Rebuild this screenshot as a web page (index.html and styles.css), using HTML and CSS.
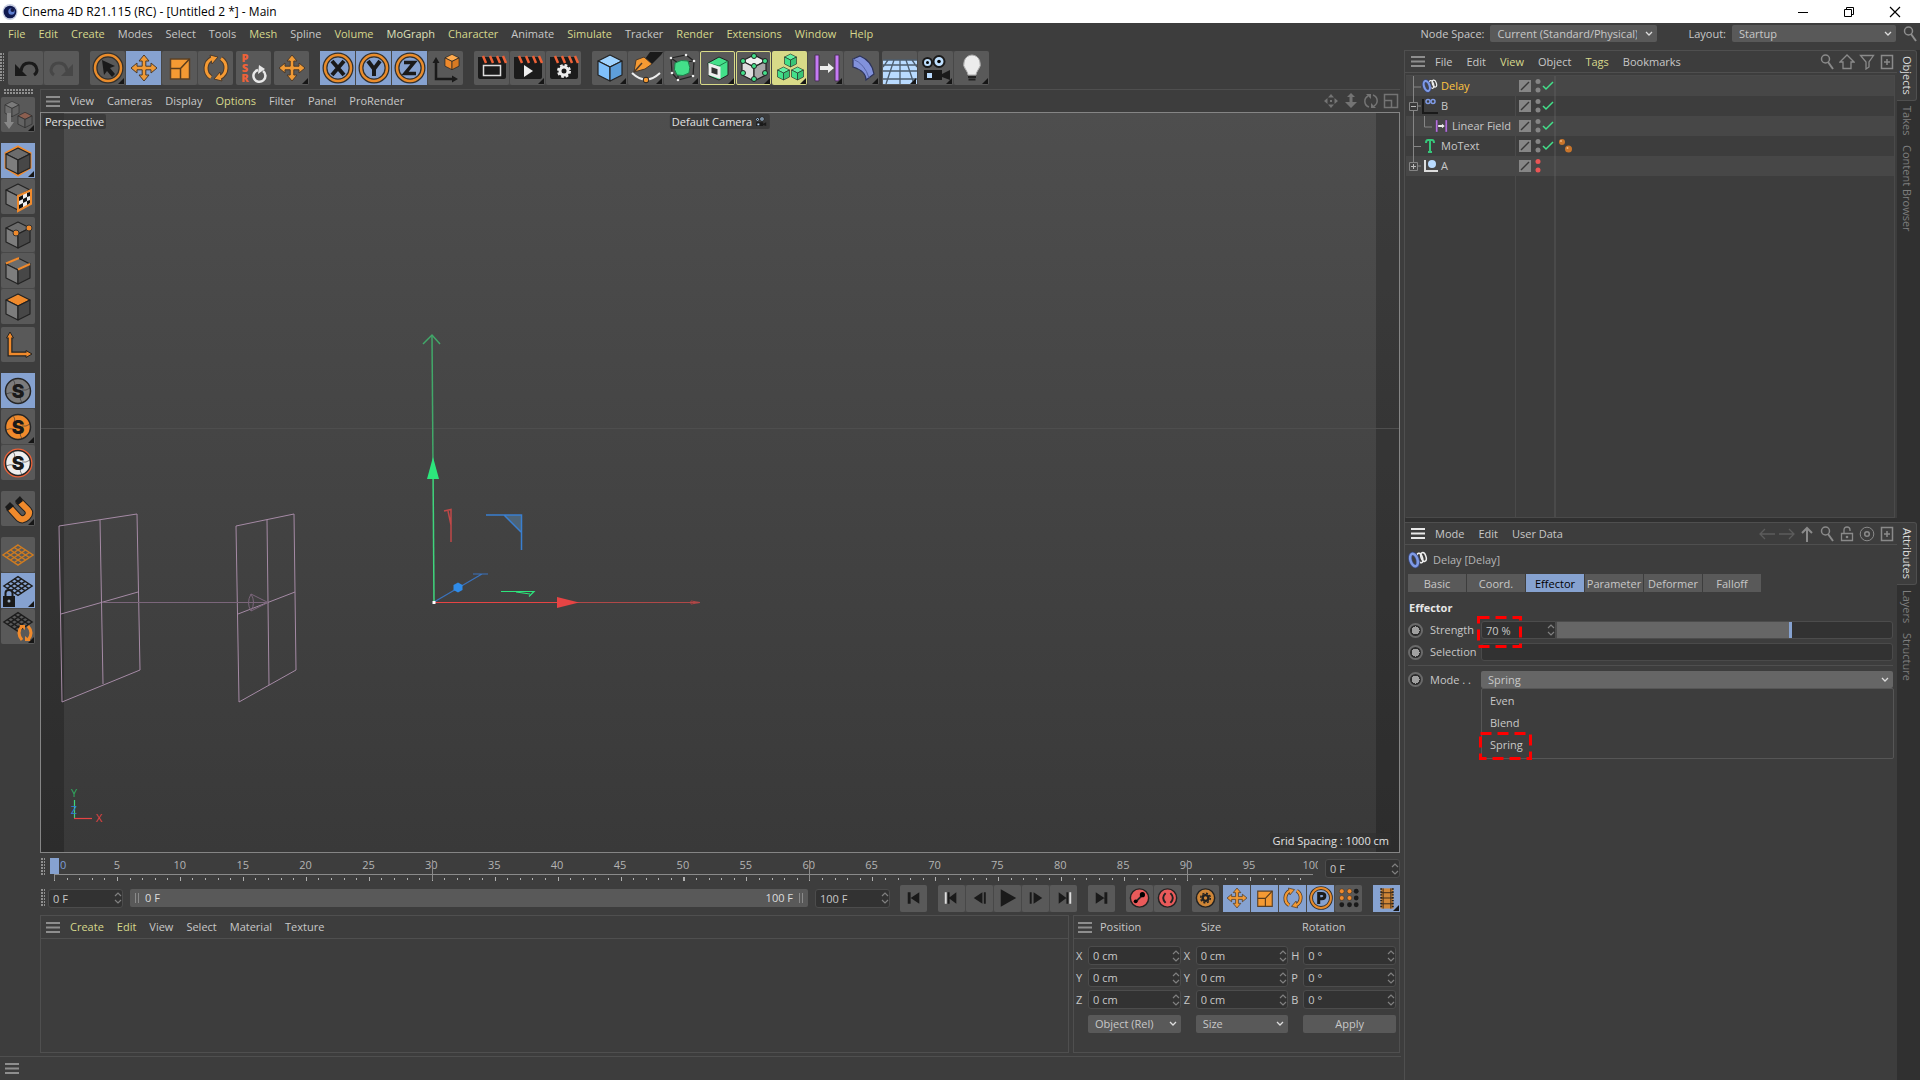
FILE: index.html
```html
<!DOCTYPE html>
<html lang="en">
<head>
<meta charset="utf-8">
<title>Cinema 4D R21.115 (RC) - [Untitled 2 *] - Main</title>
<link rel="stylesheet" href="styles.css">
</head>
<body>
<svg class="defs" aria-hidden="true">
  <symbol id="move" viewBox="0 0 34 34"><path d="M17 4l5 6h-3.200v5.200H24V12l6 5-6 5v-3.200h-5.200V24H22l-5 6-5-6h3.200v-5.200H10V22l-6-5 6-5v3.200h5.200V10H12z" fill="#f09a35" stroke="#4a3a2c" stroke-width="1"/></symbol>
  <symbol id="scale" viewBox="0 0 34 34"><path d="M7.500 8h19v20h-19z" fill="#f59a33" stroke="#5a4128" stroke-width="1.500"/><path d="M7.500 17.500h10v10.500M17.500 17.500l9-9.500" fill="none" stroke="#5a3c1c" stroke-width="1.500"/></symbol>
  <symbol id="rotate" viewBox="0 0 34 34"><g fill="none" stroke="#4a3a2c" stroke-width="5"><path d="M12 26.500A11 11 0 0 1 13 7.500M22 7.500A11 11 0 0 1 21 26.500"/></g><path d="M11 4l8 2-6 7zM23 30l-8-2 6-7z" fill="#f59a33" stroke="#4a3a2c"/><g fill="none" stroke="#f59a33" stroke-width="3"><path d="M12 26.500A11 11 0 0 1 13 7.500M22 7.500A11 11 0 0 1 21 26.500"/></g></symbol>
  <symbol id="cube" viewBox="0 0 34 34"><g stroke="#222" stroke-width="1.200" stroke-linejoin="round"><path d="M17 4l12 6-12 6-12-6z" fill="var(--top)"/><path d="M5 10l12 6v14L5 24z" fill="var(--left)"/><path d="M29 10l-12 6v14l12-6z" fill="var(--right)"/></g></symbol>
  <symbol id="ring" viewBox="0 0 34 34"><circle cx="17" cy="17" r="13" fill="none" stroke="#33302c" stroke-width="5"/><circle cx="17" cy="17" r="13" fill="none" stroke="#e98c2c" stroke-width="2.500"/></symbol>
  <symbol id="clap" viewBox="0 0 34 34"><path d="M3 11h28v15q0 2-2 2H5q-2 0-2-2z" fill="#1b1b1b"/><path d="M3 6h26v5H3z" fill="#1b1b1b"/><path d="M8 5l3 7M15 5l3 7M22 5l3 7M28 5l3 7" stroke="#ee6238" stroke-width="2.500"/></symbol>
  <symbol id="grid" viewBox="0 0 34 24"><path d="M17 2l15 10-15 10L2 12z" fill="none" stroke="currentColor" stroke-width="1.500"/><path d="M13.300 4.500l15 10M9.500 7l15 10M5.700 9.500l15 10M20.700 4.500l-15 10M24.500 7l-15 10M28.300 9.500l-15 10" stroke="currentColor" stroke-width="1.500"/></symbol>
  <symbol id="snap" viewBox="0 0 34 34"><circle cx="17" cy="17" r="12.500" fill="var(--disc)" stroke="#262626" stroke-width="1.500"/><path d="M12 5q3 4 1 8M5 20q4-2 8-1M29 14q-4 3-8 2M21 29q-3-4-1-8" fill="none" stroke="#333" stroke-opacity=".6"/></symbol>
  <symbol id="delay" viewBox="0 0 20 18"><g fill="none"><ellipse cx="15.500" cy="6" rx="2.500" ry="4.500" transform="rotate(-18 15.500 6)" stroke="#eee" stroke-width="1.500"/><ellipse cx="12" cy="7" rx="2.500" ry="5" transform="rotate(-18 12 7)" stroke="#eee" stroke-width="1.500"/><ellipse cx="6" cy="9" rx="3.500" ry="6.500" transform="rotate(-18 6 9)" stroke="#3b4a80" stroke-width="4"/><ellipse cx="6" cy="9" rx="3.500" ry="6.500" transform="rotate(-18 6 9)" stroke="#7f9be6" stroke-width="2.500"/></g></symbol>
  <symbol id="camera" viewBox="0 0 34 34"><path d="M5 19h18v10H5zM23 23l8-4v10l-8-3z" fill="#1a1a1a"/><path d="M8 22h5v5H8z" fill="#b9dbff"/><circle cx="8.500" cy="11.500" r="4.500" fill="#bfe0ff" stroke="#1a1a1a" stroke-width="2"/><circle cx="20" cy="10.500" r="5.500" fill="#bfe0ff" stroke="#1a1a1a" stroke-width="2"/><circle cx="8.500" cy="11.500" r="1.500"/><circle cx="20" cy="10.500" r="1.800"/></symbol>
  <symbol id="find" viewBox="0 0 16 16"><circle cx="6.500" cy="5" r="4" fill="none" stroke="currentColor" stroke-width="1.500"/><path d="M9 8l5 7" stroke="currentColor" stroke-width="2"/></symbol>
  <symbol id="plusbox" viewBox="0 0 16 16"><path d="M2.500 1.500h11v13h-11zM8 5v6M5 8h6" fill="none" stroke="currentColor" stroke-width="1.500"/></symbol>
  <symbol id="burger" viewBox="0 0 14 11"><path d="M0 1h14M0 5.500h14M0 10h14" stroke="currentColor" stroke-width="2"/></symbol>
  <symbol id="updown" viewBox="0 0 8 14"><path d="M1 5l3-3 3 3M1 9l3 3 3-3" fill="none" stroke="#808080" stroke-width="1.200"/></symbol>
  <symbol id="field" viewBox="0 0 34 34"><path d="M6 4h4v26H6zM26 4h4v26h-4z" fill="#c67bf5" stroke="#4a3357"/><path d="M11 15h8v-3l6 5-6 5v-3h-8z" fill="#eee"/></symbol>
  <symbol id="start" viewBox="0 0 27 26"><path d="M7 7h3v12H7zM19 7v12l-9-6z" fill="#1a1a1a"/></symbol>
  <symbol id="flags" viewBox="0 0 38 20"><path d="M2 4h12v12H2z" fill="#868686"/><path d="M4 14l8-8" stroke="#383838" stroke-width="1.500"/><circle cx="21" cy="5.500" r="2.500" fill="var(--dot,#858585)"/><circle cx="21" cy="14" r="2.500" fill="var(--dot,#858585)"/></symbol>
  <symbol id="tick" viewBox="0 0 12 12"><path d="M1 6l3 3 7-7" fill="none" stroke="#43e08a" stroke-width="1.500"/></symbol>
</svg>

<header class="titlebar">
  <svg width="16" height="18" viewBox="0 0 16 18"><ellipse cx="8" cy="9" rx="7.500" ry="8" fill="#c9cfe2"/><circle cx="8" cy="9" r="6.300" fill="#10194f"/><circle cx="9.500" cy="8.500" r="3.200" fill="#5f7fd0"/><circle cx="10.500" cy="7" r="2" fill="#151a48"/></svg>
  <h1>Cinema 4D R21.115 (RC) - [Untitled 2 *] - Main</h1>
  <div class="winbtns">
    <button aria-label="Minimize"><svg width="12" height="12"><path d="M1 6.500h10" stroke="#000"/></svg></button>
    <button aria-label="Restore"><svg width="12" height="12"><path d="M1.500 3.500h7v7h-7zM3.500 3.500v-2h7v7h-2" fill="none" stroke="#000"/></svg></button>
    <button aria-label="Close"><svg width="12" height="12"><path d="M1 1l10 10M11 1L1 11" stroke="#000" stroke-width="1.200"/></svg></button>
  </div>
</header>

<div class="menubar">
  <nav class="menu">
    <button class="hot">File</button><button class="hot">Edit</button><button class="hot">Create</button><button>Modes</button><button>Select</button><button>Tools</button><button class="hot">Mesh</button><button>Spline</button><button class="hot">Volume</button><button class="warm">MoGraph</button><button class="hot">Character</button><button>Animate</button><button class="hot">Simulate</button><button>Tracker</button><button class="hot">Render</button><button class="hot">Extensions</button><button class="hot">Window</button><button class="hot">Help</button>
  </nav>
  <div class="spaces">
    <label for="space">Node Space:</label>
    <select id="space" class="space"><option>Current (Standard/Physical)</option></select>
    <label for="layout" class="layoutlabel">Layout:</label>
    <select id="layout" class="layout"><option>Startup</option></select>
    <svg class="dim" width="16" height="16"><use href="#find"/></svg>
  </div>
</div>

<div class="workspace">
  <div class="left">
    <div class="toolbar">
      <span class="grip tall"></span>
      <div class="group">
        <button aria-label="Undo"><svg viewBox="0 0 34 34"><path d="M12 20q1-8 8-8t8 7q0 3-3 5" fill="none" stroke="#1a1a1a" stroke-width="3"/><path d="M6 13v12h12z" fill="#1a1a1a"/></svg></button>
        <button aria-label="Redo"><svg viewBox="0 0 34 34"><path d="M22 20q-1-8-8-8t-8 7q0 3 3 5" fill="none" stroke="#474747" stroke-width="3"/><path d="M28 13v12H16z" fill="#474747"/></svg></button>
      </div>
      <div class="group wide">
        <button class="more" aria-label="Live Selection"><svg viewBox="0 0 34 34"><use href="#ring"/><path d="M11 9l13 6-5 2 5 6-3 3-5-6-3 4z" fill="#1a1a1a"/></svg></button>
        <button class="on" aria-label="Move"><svg><use href="#move"/></svg></button>
        <button aria-label="Scale"><svg><use href="#scale"/></svg></button>
        <button aria-label="Rotate"><svg><use href="#rotate"/></svg></button>
      </div>
      <div class="group"><button aria-label="Reset PSR"><svg viewBox="0 0 34 34"><g class="psr"><text x="8" y="11">P</text><text x="8" y="21">S</text><text x="8" y="31">R</text></g><path d="M21 19a6 6 0 1 0 5 1" fill="none" stroke="#e8e8e8" stroke-width="2.500"/><path d="M22 14l6 4-7 5z" fill="#e8e8e8"/></svg></button></div>
      <div class="group"><button class="more" aria-label="Last tool"><svg><use href="#move"/></svg></button></div>
      <div class="group wide">
        <button class="on" aria-label="X axis"><svg viewBox="0 0 34 34"><use href="#ring"/><path d="M11 10l12 14M23 10L11 24" stroke="#1a1a1a" stroke-width="4"/></svg></button>
        <button class="on" aria-label="Y axis"><svg viewBox="0 0 34 34"><use href="#ring"/><path d="M11 10l6 8 6-8M17 17v8" fill="none" stroke="#1a1a1a" stroke-width="4"/></svg></button>
        <button class="on" aria-label="Z axis"><svg viewBox="0 0 34 34"><use href="#ring"/><path d="M11 11.500h10L12 22.500h11" fill="none" stroke="#1a1a1a" stroke-width="3.500"/></svg></button>
        <button aria-label="Coordinate system"><svg viewBox="0 0 34 34"><path d="M7 10v18h18" fill="none" stroke="#1a1a1a" stroke-width="2.500"/><path d="M7 6l3.500 6h-7zM29 28l-6 3.500v-7z" fill="#1a1a1a"/><use class="amber" href="#cube" x="13" y="1" width="20" height="20"/></svg></button>
      </div>
      <div class="group wide">
        <button aria-label="Render View"><svg viewBox="0 0 34 34"><use href="#clap"/><path d="M8.500 14.500h17v10h-17z" fill="none" stroke="#ddd" stroke-width="1.500"/></svg></button>
        <button class="more" aria-label="Render to Picture Viewer"><svg viewBox="0 0 34 34"><use href="#clap"/><path d="M13 14l9 6-9 6z" fill="#eee"/></svg></button>
        <button aria-label="Render Settings"><svg viewBox="0 0 34 34"><use href="#clap"/><circle cx="17" cy="20" r="4" fill="none" stroke="#eee" stroke-width="3"/><circle cx="17" cy="20" r="6" fill="none" stroke="#eee" stroke-width="2" stroke-dasharray="2.700 2"/></svg></button>
      </div>
      <div class="group wide">
        <button class="more sky" aria-label="Cube"><svg><use href="#cube"/></svg></button>
        <button class="more" aria-label="Pen"><svg viewBox="0 0 34 34"><path d="M16 8l5-7h13l-2 3-9 9z" fill="#1a1a1a"/><path d="M5 21l2-12 8-3 8 7-7 5z" fill="#f59a33" stroke="#4a3a2c"/><path d="M5 21l8-9" stroke="#4a3a2c" stroke-width="1.500"/><path d="M3 22q14 13 28 0" fill="none" stroke="#eee" stroke-width="2"/><circle cx="17" cy="29" r="2.800" fill="#f59a33" stroke="#222"/></svg></button>
        <button class="more" aria-label="Subdivision Surface"><svg viewBox="0 0 34 34"><path d="M6 7l15-3 8 6-1 15-15 4-6-7zM6 7l7 5 16-2M13 12v17" fill="none" stroke="#222" stroke-width="1.200"/><path d="M10 12q6-4 13-2 3 7 1 12-6 4-12 2-4-5-2-12z" fill="#43e08a" stroke="#1f7a49"/><g fill="#eee"><circle cx="6" cy="7" r="1.300"/><circle cx="21" cy="4" r="1.300"/><circle cx="29" cy="10" r="1.300"/><circle cx="28" cy="25" r="1.300"/><circle cx="13" cy="29" r="1.300"/><circle cx="7" cy="22" r="1.300"/></g></svg></button>
        <button class="more lined" aria-label="Extrude"><svg viewBox="0 0 34 34"><path d="M7 12l11-6 9 4v14l-9 5-10-4z" fill="#43e08a" stroke="#222"/><path d="M7 12l11 3 9-5" fill="none" stroke="#1f7a49"/><path d="M9 14l9 3v9l-9-3z" fill="#333" stroke="#eee" stroke-width="3"/></svg></button>
        <button class="more lined" aria-label="Volume Builder"><svg class="white" viewBox="0 0 34 34"><use href="#cube"/><g fill="#43e08a" stroke="#222"><circle cx="17" cy="5" r="2.500"/><circle cx="6" cy="10" r="2.500"/><circle cx="28" cy="10" r="2.500"/><circle cx="17" cy="15" r="2.500"/><circle cx="6" cy="22" r="2.500"/><circle cx="28" cy="22" r="2.500"/><circle cx="17" cy="28" r="2.500"/></g></svg></button>
        <button class="more gold mint" aria-label="Cloner"><svg viewBox="0 0 34 34"><use href="#cube" x="9" y="1" width="17" height="17"/><use href="#cube" x="2" y="14" width="17" height="17"/><use href="#cube" x="16" y="14" width="17" height="17"/></svg></button>
        <button class="more" aria-label="Linear Field"><svg><use href="#field"/></svg></button>
        <button class="more" aria-label="Bend"><svg viewBox="0 0 34 34"><path d="M8 8l7-3q12 5 14 18l-8 6q0-9-13-13z" fill="#8292dc" stroke="#2d3358" stroke-width="1.200"/><path d="M8 8q12 5 16 19" fill="none" stroke="#5966a8"/></svg></button>
      </div>
      <div class="group">
        <button class="more" aria-label="Floor"><svg viewBox="0 0 34 34"><path d="M0 9h34v24H0z" fill="#b9dbff"/><path d="M0 9h34M0 14h34M0 20h34M0 28h34M17 9v24M11 9L3 33M23 9l8 24M5 9L0 16M29 9l5 7" stroke="#4d5d6e" stroke-width="1.300"/></svg></button>
        <button class="more" aria-label="Camera"><svg><use href="#camera"/></svg></button>
        <button class="more" aria-label="Light"><svg viewBox="0 0 34 34"><path d="M17 4a9 9 0 0 1 6 15q-2 3-2 5h-8q0-2-2-5a9 9 0 0 1 6-15z" fill="#ececec" stroke="#aaa"/><path d="M13 26h8M13.500 28.500h7" stroke="#222" stroke-width="1.800"/></svg></button>
      </div>
    </div>

    <div class="stage">
      <div class="tools">
        <span class="grip flat"></span>
        <div class="vgroup"><button class="more" aria-label="Make Editable"><svg viewBox="0 0 34 34"><use class="ash" href="#cube" x="1" y="1" width="20" height="20"/><use class="rust" href="#cube" x="14" y="12" width="20" height="20"/><path d="M6 15h4v9h3l-5 7-5-7h3z" fill="#888"/></svg></button></div>
        <div class="vgroup apart">
          <button class="on more steel" aria-label="Model"><svg viewBox="0 0 34 34"><path d="M17 3l12 6.500v14L17 31 5 23.500v-14z" fill="none" stroke="#f08a2c" stroke-width="3"/><use href="#cube"/></svg></button>
          <button class="steel" aria-label="Texture"><svg viewBox="0 0 34 34"><use href="#cube"/><path d="M17 16l13-6v14l-13 7z" fill="#eee" stroke="#f08a2c" stroke-width="2"/><path d="M18 17l4-2v4l-4 2zM26 13l3-1v4l-3 1zM22 19l4-2v4l-4 2zM18 25l4-2v4l-4 2zM26 21l3-1v3l-3 2z" fill="#111"/></svg></button>
        </div>
        <div class="vgroup">
          <button class="steel" aria-label="Points"><svg viewBox="0 0 34 34"><use href="#cube"/><g fill="#f08a2c" stroke="#333"><circle cx="15" cy="15" r="3"/><circle cx="28" cy="10" r="3"/></g></svg></button>
          <button class="steel" aria-label="Edges"><svg viewBox="0 0 34 34"><use href="#cube"/><path d="M5 9.500L18 4M17 15.500L29 10" stroke="#f08a2c" stroke-width="2"/></svg></button>
          <button class="steel orangetop" aria-label="Polygons"><svg><use href="#cube"/></svg></button>
        </div>
        <div class="vgroup"><button aria-label="Axis"><svg viewBox="0 0 34 34"><path d="M9 9v17h17" fill="none" stroke="#222" stroke-width="5"/><path d="M9 4l3.500 6h-7zM31 26l-6 3.500v-7z" fill="#f08a2c" stroke="#222"/><path d="M9 9v17h17" fill="none" stroke="#f08a2c" stroke-width="2.500"/></svg></button></div>
        <div class="vgroup apart">
          <button class="on discgrey" aria-label="Viewport Solo Off"><svg viewBox="0 0 34 34"><use href="#snap"/><text class="solo" x="17" y="24">S</text></svg></button>
          <button class="more discorange" aria-label="Viewport Solo Single"><svg viewBox="0 0 34 34"><use href="#snap"/><text class="solo" x="17" y="24">S</text></svg></button>
          <button class="discwhite" aria-label="Viewport Solo Hierarchy"><svg viewBox="0 0 34 34"><circle cx="17" cy="17" r="13.500" fill="none" stroke="#ee6238" stroke-width="2"/><use href="#snap"/><text class="solo" x="17" y="24">S</text></svg></button>
        </div>
        <div class="vgroup apart"><button class="more" aria-label="Enable Snap"><svg viewBox="0 0 34 34"><path d="M8 15l10 11q4 3 8-1t0-8L17 8" fill="none" stroke="#222" stroke-width="8"/><path d="M8 15l10 11q4 3 8-1t0-8L17 8" fill="none" stroke="#f08a2c" stroke-width="6"/><path d="M4 15l5-5 4 4-6 5zM14 9l5-5 3 5-5 4z" fill="#1a1a1a"/></svg></button></div>
        <div class="vgroup apart">
          <button class="orangeink" aria-label="Workplane"><svg viewBox="0 0 34 34"><use href="#grid" x="0" y="5" width="34" height="24"/></svg></button>
          <button class="on more ink" aria-label="Locked Workplane"><svg viewBox="0 0 34 34"><use href="#grid" x="1" y="0" width="32" height="24"/><path d="M2 22h12v11H2z" fill="#1a1a1a"/><path d="M4.500 22v-3q0-3 3.500-3t3.500 3v3" fill="none" stroke="#1a1a1a" stroke-width="2"/><circle cx="8" cy="27" r="1.500" fill="#9ab"/></svg></button>
          <button class="more ink" aria-label="Planar Workplane"><svg viewBox="0 0 34 34"><use href="#grid" x="1" y="0" width="32" height="24"/><path d="M21 16q-6 7 0 14M27 16q6 7 0 14" fill="none" stroke="#f08a2c" stroke-width="3"/><path d="M18 15h6v5zM30 31h-6v-5z" fill="#f08a2c"/></svg></button>
        </div>
      </div>

      <div class="center">
        <section class="viewpanel">
          <div class="panelmenu">
            <svg class="dim" width="14" height="11"><use href="#burger"/></svg>
            <nav class="menu"><button>View</button><button>Cameras</button><button>Display</button><button class="hot">Options</button><button>Filter</button><button>Panel</button><button>ProRender</button></nav>
            <div class="panelicons">
              <svg width="16" height="16" viewBox="0 0 16 16"><path d="M8 1l3 3.500H5zM8 15l3-3.500H5zM1 8l3.500-3v6zM15 8l-3.500-3v6zM7 7h2v2H7z" fill="currentColor"/></svg>
              <svg width="16" height="16" viewBox="0 0 16 16"><path d="M8 0l4 4H9.500v5H14l-6 6-6-6h4.500V4H4z" fill="currentColor"/></svg>
              <svg width="16" height="16" viewBox="0 0 16 16"><path d="M6 14A6 6 0 0 1 5 3M10 2a6 6 0 0 1 1 11" fill="none" stroke="currentColor" stroke-width="1.500"/><path d="M3 1h5v5zM13 15H8v-5z" fill="currentColor"/></svg>
              <svg width="16" height="16" viewBox="0 0 16 16"><path d="M1.500 1.500h13v13h-13zM1.500 7.500h7v7" fill="none" stroke="currentColor" stroke-width="1.500"/></svg>
            </div>
          </div>
          <div class="viewport">
            <svg class="scene" viewBox="41 113 1358 739" preserveAspectRatio="xMidYMid slice">
              <path d="M41 113h23v739H41zM1376 113h23v739h-23z" fill="#000" fill-opacity=".22"/>
              <path d="M41 428.500h1358" stroke="#4e4e4e"/>
              <g fill="none" stroke="#a58aa5">
                <path d="M59 526l78-12 3 156-78 32zM61 614l77-22M100 520l3 164"/>
                <path d="M236 526l58-12 2 156-57 32zM238 614l57-22M267 520l2 165"/>
                <path d="M102 602.500h166M251 594l17 8.500-17 8.500q-5-8 0-17zM251 594q5 8 0 17" stroke="#7b667b"/>
              </g>
              <path d="M432 336l1 130" stroke="#41a869" stroke-width="1.500"/>
              <path d="M433 466l1 136" stroke="#3fd57c" stroke-width="1.500"/>
              <path d="M423 344l9-9 8 9" fill="none" stroke="#41a869" stroke-width="1.500"/>
              <path d="M427 479h12l-6-22z" fill="#2de57c"/>
              <path d="M434 602.500h130" stroke="#e64444"/><path d="M564 602.500h136M691 601l9 1.500-9 1.500z" stroke="#b04848"/>
              <path d="M557 597v11l22-5.500z" fill="#e64444"/>
              <path d="M444 511l7-1.500V542M448 511l3 14" fill="none" stroke="#c04848" stroke-width="1.500"/>
              <path d="M504 515h17v17z" fill="#4d6478"/><path d="M486 515h35.500v35M504 515l17 17" fill="none" stroke="#3a7fd0" stroke-width="1.500"/>
              <path d="M434 602l48-28M473 574h15" stroke="#3a73bd" stroke-width="1.200"/>
              <path d="M458 582.500l4.500 2.500v5l-4.500 2.500-4.500-2.500v-5z" fill="#2f8be8"/>
              <path d="M501 591.500h33l-5 5M516 592l14 2" fill="none" stroke="#2de57c" stroke-width="1.200"/>
              <path d="M432.500 601h3v3h-3z" fill="#fff"/>
              <path d="M74.500 800v18" stroke="#3fd57c" stroke-width="1.200"/><path d="M74 818.500h18" stroke="#e64444" stroke-width="1.200"/>
              <g class="axes"><text x="74" y="797" fill="#2fae62">Y</text><text x="74" y="814" fill="#2f7fd8">Z</text><text x="99" y="822" fill="#e64444">X</text></g>
            </svg>
            <span class="tag persp">Perspective</span>
            <span class="tag cam">Default Camera<svg width="14" height="13"><use href="#camera"/></svg></span>
            <span class="tag spacing">Grid Spacing : 1000 cm</span>
          </div>
        </section>

        <div class="timeline">
          <span class="grip"></span>
          <div class="ruler">
            <i class="playhead"></i>
            <div class="numbers"><span class="now">0</span><span>5</span><span>10</span><span>15</span><span>20</span><span>25</span><span>30</span><span>35</span><span>40</span><span>45</span><span>50</span><span>55</span><span>60</span><span>65</span><span>70</span><span>75</span><span>80</span><span>85</span><span>90</span><span>95</span><span>100</span></div>
            <div class="ticks"></div>
          </div>
          <label class="spin frame"><input aria-label="Current frame" value="0 F"><svg><use href="#updown"/></svg></label>
        </div>

        <div class="transport">
          <span class="grip"></span>
          <label class="spin frame"><input aria-label="Start frame" value="0 F"><svg><use href="#updown"/></svg></label>
          <div class="range"><i class="handle"></i><span>0 F</span><span class="end">100 F</span><i class="handle"></i></div>
          <label class="spin frame"><input aria-label="End frame" value="100 F"><svg><use href="#updown"/></svg></label>
          <div class="keys">
            <div class="group small"><button aria-label="Go to Start"><svg><use href="#start"/></svg></button></div>
            <div class="group small">
              <button aria-label="Previous Key"><svg viewBox="0 0 27 26"><path d="M6 7h2v12H6z" fill="#ddd"/><path d="M9 7h2v12H9zM18 7v12l-8-6z" fill="#1a1a1a"/></svg></button>
              <button aria-label="Previous Frame"><svg viewBox="0 0 27 26"><path d="M16 7v12l-9-6zM17.500 7h2v12h-2z" fill="#1a1a1a"/></svg></button>
              <button aria-label="Play"><svg viewBox="0 0 27 26"><path d="M6 4v18l16-9z" fill="#1a1a1a"/></svg></button>
              <button aria-label="Next Frame"><svg viewBox="0 0 27 26"><path d="M11 7v12l9-6zM7 7h2v12H7z" fill="#1a1a1a"/></svg></button>
              <button aria-label="Next Key"><svg viewBox="0 0 27 26"><path d="M19 7h2v12h-2z" fill="#ddd"/><path d="M16 7h2v12h-2zM8 7v12l8-6z" fill="#1a1a1a"/></svg></button>
            </div>
            <div class="group small"><button aria-label="Go to End"><svg viewBox="0 0 27 26"><path d="M16 7h3v12h-3zM7 7v12l9-6z" fill="#1a1a1a"/></svg></button></div>
            <div class="group small">
              <button aria-label="Record"><svg viewBox="0 0 27 26"><circle cx="13" cy="13" r="9.500" fill="#ea5a5a" stroke="#222" stroke-width="1.500"/><path d="M9 17l7-7" stroke="#222" stroke-width="2"/><circle cx="9" cy="16.500" r="2"/><circle cx="16" cy="9.500" r="2.700"/></svg></button>
              <button aria-label="Autokeying"><svg viewBox="0 0 27 26"><circle cx="13" cy="13" r="9.500" fill="#ea5a5a" stroke="#222" stroke-width="1.500"/><path d="M11 8q-5 5 0 10M16 8q5 5 0 10" fill="none" stroke="#222" stroke-width="2"/></svg></button>
            </div>
            <div class="group small"><button aria-label="Keyframe Selection"><svg viewBox="0 0 27 26"><circle cx="13" cy="13" r="9.500" fill="#cf8637" stroke="#222" stroke-width="1.500"/><circle cx="13" cy="13" r="3" fill="none" stroke="#222" stroke-width="2.500"/><circle cx="13" cy="13" r="5" fill="none" stroke="#222" stroke-width="1.500" stroke-dasharray="2.200 1.700"/></svg></button></div>
            <div class="group small joined">
              <button class="on" aria-label="Position"><svg><use href="#move"/></svg></button>
              <button class="on" aria-label="Scale"><svg><use href="#scale"/></svg></button>
              <button class="on" aria-label="Rotation"><svg><use href="#rotate"/></svg></button>
              <button class="on" aria-label="Parameter"><svg viewBox="0 0 34 34"><use href="#ring"/><path d="M14 25V11h4q4 0 4 3.500T18 18h-4" fill="none" stroke="#1a1a1a" stroke-width="4"/></svg></button>
              <button aria-label="Point Level"><svg viewBox="0 0 27 26"><g fill="#f08a2c" stroke="#222" stroke-width=".5"><circle cx="6" cy="6" r="2.500"/><circle cx="14" cy="6" r="2.500"/><circle cx="6" cy="13" r="2.500"/><circle cx="14" cy="13" r="2.500"/></g><g fill="#1a1a1a"><circle cx="21" cy="6" r="2.500"/><circle cx="21" cy="13" r="2.500"/><circle cx="6" cy="20" r="2.500"/><circle cx="14" cy="20" r="2.500"/><circle cx="21" cy="20" r="2.500"/></g></svg></button>
            </div>
            <div class="group small"><button class="on more" aria-label="Playback Settings"><svg viewBox="0 0 27 26"><path d="M7 3h13v21H7z" fill="#cf8637"/><path d="M9.500 3v21M17.500 3v21M7 7.500h13M7 13h13M7 19h13" stroke="#3a2a1a"/><path d="M7.500 3v21M19.500 3v21" stroke="#222" stroke-width="2" stroke-dasharray="1.500 1.500"/></svg></button></div>
          </div>
        </div>

        <div class="managers">
          <section class="materials">
            <div class="panelmenu">
              <svg class="dim" width="14" height="11"><use href="#burger"/></svg>
              <nav class="menu"><button class="hot">Create</button><button class="hot">Edit</button><button>View</button><button>Select</button><button>Material</button><button>Texture</button></nav>
            </div>
          </section>
          <section class="coords">
            <div class="panelmenu heads"><svg class="dim" width="14" height="11"><use href="#burger"/></svg><span>Position</span><span>Size</span><span>Rotation</span></div>
            <div class="fields">
              <label for="px">X</label><span class="spin"><input id="px" value="0 cm"><svg><use href="#updown"/></svg></span>
              <label for="sx">X</label><span class="spin"><input id="sx" value="0 cm"><svg><use href="#updown"/></svg></span>
              <label for="rh">H</label><span class="spin"><input id="rh" value="0 °"><svg><use href="#updown"/></svg></span>
              <label for="py">Y</label><span class="spin"><input id="py" value="0 cm"><svg><use href="#updown"/></svg></span>
              <label for="sy">Y</label><span class="spin"><input id="sy" value="0 cm"><svg><use href="#updown"/></svg></span>
              <label for="rp">P</label><span class="spin"><input id="rp" value="0 °"><svg><use href="#updown"/></svg></span>
              <label for="pz">Z</label><span class="spin"><input id="pz" value="0 cm"><svg><use href="#updown"/></svg></span>
              <label for="sz">Z</label><span class="spin"><input id="sz" value="0 cm"><svg><use href="#updown"/></svg></span>
              <label for="rb">B</label><span class="spin"><input id="rb" value="0 °"><svg><use href="#updown"/></svg></span>
              <select class="col2" aria-label="Position space"><option>Object (Rel)</option></select>
              <select class="col4" aria-label="Size mode"><option>Size</option></select>
              <button class="apply">Apply</button>
            </div>
          </section>
        </div>
      </div>
    </div>
    <footer class="status"><svg class="dim" width="14" height="11"><use href="#burger"/></svg></footer>
  </div>

  <div class="right">
    <section class="objects">
      <div class="pane">
        <div class="panelmenu">
          <svg class="dim" width="14" height="11"><use href="#burger"/></svg>
          <nav class="menu"><button>File</button><button>Edit</button><button class="hot">View</button><button>Object</button><button class="hot">Tags</button><button>Bookmarks</button></nav>
          <div class="panelicons">
            <svg width="16" height="16"><use href="#find"/></svg>
            <svg width="16" height="16" viewBox="0 0 16 16"><path d="M1 8l7-7 7 7h-3v6.500H4V8z" fill="none" stroke="currentColor" stroke-width="1.300"/></svg>
            <svg width="16" height="16" viewBox="0 0 16 16"><path d="M1.500 1.500h13L10 8v5l-3 2V8z" fill="none" stroke="currentColor" stroke-width="1.300"/></svg>
            <svg width="16" height="16"><use href="#plusbox"/></svg>
          </div>
        </div>
        <ul class="tree">
          <li class="picked"><span class="name"><svg width="15" height="20"><path d="M7.500 0v20M7.500 11H15" fill="none" stroke="#858585"/></svg><svg width="16" height="16"><use href="#delay"/></svg>Delay</span><svg class="flags"><use href="#flags"/></svg><svg class="tick"><use href="#tick"/></svg></li>
          <li><span class="name"><svg width="15" height="20"><path d="M7.500 0v20M12 10h3" stroke="#858585"/><path d="M3.500 6.500h8v8h-8z" fill="#3a3a3a" stroke="#858585"/><path d="M5 10.500h5" stroke="#bbb"/></svg><svg width="16" height="16" viewBox="0 0 16 16"><path d="M1 1v14h15" fill="none" stroke="#1a1a1a" stroke-width="2"/><circle cx="6" cy="3.500" r="2" fill="none" stroke="#7f9be6" stroke-width="1.500"/><circle cx="11" cy="3.500" r="2" fill="none" stroke="#7f9be6" stroke-width="1.500"/></svg>B</span><svg class="flags"><use href="#flags"/></svg><svg class="tick"><use href="#tick"/></svg></li>
          <li><span class="name"><svg width="26" height="20"><path d="M7.500 0v20M18.500 0v11H26" fill="none" stroke="#858585"/></svg><svg width="16" height="16"><use href="#field"/></svg>Linear Field</span><svg class="flags"><use href="#flags"/></svg><svg class="tick"><use href="#tick"/></svg></li>
          <li><span class="name"><svg width="15" height="20"><path d="M7.500 0v20M7.500 10.500H15" stroke="#858585"/></svg><svg width="16" height="16" viewBox="0 0 16 16"><path d="M4 5q0-3 2-3h4q2 0 2 3M8 2v12M6 14h4" fill="none" stroke="#36c77a" stroke-width="2"/></svg>MoText</span><svg class="flags"><use href="#flags"/></svg><svg class="tick"><use href="#tick"/></svg><svg class="phong" viewBox="0 0 15 16"><circle cx="4" cy="4" r="3" fill="#c9752b"/><circle cx="10.500" cy="11" r="3.500" fill="#c9752b"/><circle cx="9.500" cy="10" r="1" fill="#f2b57c"/><circle cx="3" cy="3" r="1" fill="#f2b57c"/></svg></li>
          <li class="hidden-object"><span class="name"><svg width="15" height="20"><path d="M7.500 0v10M12 10h3" stroke="#858585"/><path d="M3.500 6.500h8v8h-8z" fill="#474747" stroke="#858585"/><path d="M5 10.500h5M7.500 8v5" stroke="#bbb"/></svg><svg width="16" height="16" viewBox="0 0 16 16"><path d="M3 2v11h13" fill="none" stroke="#ddd" stroke-width="2"/><circle cx="10" cy="6" r="4" fill="#b9dbff"/></svg>A</span><svg class="flags"><use href="#flags"/></svg></li>
        </ul>
      </div>
      <nav class="sidetabs"><button class="active">Objects</button><button>Takes</button><button>Content Browser</button></nav>
    </section>

    <section class="attributes">
      <div class="pane">
        <div class="panelmenu">
          <svg class="lit" width="14" height="11"><use href="#burger"/></svg>
          <nav class="menu"><button>Mode</button><button>Edit</button><button>User Data</button></nav>
          <div class="panelicons">
            <svg class="off" width="16" height="16" viewBox="0 0 16 16"><path d="M6 3L1 8l5 5M1 8h15" fill="none" stroke="currentColor" stroke-width="1.300"/></svg>
            <svg class="off" width="16" height="16" viewBox="0 0 16 16"><path d="M10 3l5 5-5 5M15 8H0" fill="none" stroke="currentColor" stroke-width="1.300"/></svg>
            <svg width="16" height="16" viewBox="0 0 16 16"><path d="M3 7l5-5 5 5M8 2v14" fill="none" stroke="currentColor" stroke-width="2"/></svg>
            <svg width="16" height="16"><use href="#find"/></svg>
            <svg width="16" height="16" viewBox="0 0 16 16"><path d="M2.500 7.500h11v7h-11zM5 7V4q0-3 3-3t3 3v1" fill="none" stroke="currentColor" stroke-width="1.300"/><circle cx="8" cy="11" r="1.300" fill="currentColor"/></svg>
            <svg width="16" height="16" viewBox="0 0 16 16"><g fill="none" stroke="currentColor"><circle cx="8" cy="8" r="6.800"/><circle cx="8" cy="8" r="2.300" stroke-width="1.500"/></g></svg>
            <svg width="16" height="16"><use href="#plusbox"/></svg>
          </div>
        </div>
        <div class="subject"><svg width="20" height="18"><use href="#delay"/></svg>Delay [Delay]</div>
        <div class="tabs"><button>Basic</button><button>Coord.</button><button class="active">Effector</button><button>Parameter</button><button>Deformer</button><button>Falloff</button></div>
        <h2>Effector</h2>
        <div class="prop">
          <input type="radio" aria-label="Key Strength"><label for="strength">Strength</label>
          <span class="spin strength"><input id="strength" value="70 %"><svg><use href="#updown"/></svg><svg class="mark" width="46" height="32"><rect x="1.500" y="1.500" width="42" height="29"/></svg></span>
          <input type="range" aria-label="Strength" min="0" max="100" value="70">
        </div>
        <div class="prop">
          <input type="radio" aria-label="Key Selection"><label for="selection">Selection</label><input class="line" id="selection">
        </div>
        <hr>
        <div class="prop last">
          <input type="radio" aria-label="Key Mode"><label for="mode">Mode . .</label>
          <select id="mode"><option>Spring</option></select>
        </div>
        <ul class="options"><li>Even</li><li>Blend</li><li>Spring<svg class="mark" width="54" height="29"><rect x="1.500" y="1.500" width="50" height="25"/></svg></li></ul>
      </div>
      <nav class="sidetabs"><button class="active">Attributes</button><button>Layers</button><button>Structure</button></nav>
    </section>
  </div>
</div>
</body>
</html>
```
FILE: styles.css
```css
* { box-sizing: border-box; }

body {
  margin: 0;
  min-height: 100vh;
  display: flex;
  flex-direction: column;
  background: #3d3d3d;
  color: #c8c8c8;
  font: 11px/16px "Open Sans", "Noto Sans", sans-serif;
}

.defs { position: absolute; width: 0; height: 0; }
button, input, select { font: inherit; color: inherit; margin: 0; border: 0; padding: 0; background: none; }
svg { flex: none; display: block; }
ul { list-style: none; margin: 0; padding: 0; }
.dim { color: #8e8e8e; }
.lit { color: #e8e8e8; }
.hot { color: #d6d88c; }
.warm { color: #dfe0bb; }

/* title and main menu */
.titlebar { height: 23px; display: flex; align-items: center; gap: 4px; padding-left: 2px; background: #fff; color: #000; }
.titlebar h1 { font-size: 12px; font-weight: normal; margin: 0; }
.winbtns { margin-left: auto; padding-right: 2px; display: flex; }
.winbtns button { width: 46px; height: 20px; display: grid; place-items: center; }
.menubar { height: 27px; display: flex; align-items: flex-start; justify-content: space-between; padding: 2px 2px 0 8px; }
.menu { display: flex; gap: 13px; }
.menubar .menu { line-height: 18px; }
.spaces { display: flex; align-items: center; gap: 6px; }
.layoutlabel { margin-left: 25px; }
select {
  appearance: none;
  height: 17px;
  padding: 0 20px 0 7px;
  border-radius: 2px;
  line-height: 16px;
  background: #595959 url("data:image/svg+xml,%3Csvg xmlns='http://www.w3.org/2000/svg' width='8' height='6'%3E%3Cpath d='M1 1l3 3 3-3' fill='none' stroke='%23ddd' stroke-width='1.3'/%3E%3C/svg%3E") no-repeat right 4px center;
}
.space { width: 167px; }
.layout { width: 164px; }

/* frame */
.workspace { flex: 1; display: flex; }
.left { flex: 1; min-width: 0; display: flex; flex-direction: column; }
.right { width: 516px; display: flex; flex-direction: column; gap: 4px; background: #303030; border-left: 1px solid #4f4f4f; }
.stage { flex: 1; display: flex; }
.tools { width: 40px; padding: 0 5px 0 1px; display: flex; flex-direction: column; gap: 3px; }
.center { flex: 1; min-width: 0; margin-right: 4px; display: flex; flex-direction: column; }
.grip { width: 4px; height: 18px; background: radial-gradient(circle at 1px 1px, #909090 0 1px, transparent 1px) 0 0 / 3px 3px; }
.grip.tall { height: 28px; margin: 2px 1px 0 0; }
.grip.flat { width: 29px; height: 5px; margin: 0 0 0 3px; }

/* icon buttons */
.toolbar { height: 39px; display: flex; align-items: flex-start; gap: 3px; padding-top: 1px; }
.group, .vgroup { display: flex; gap: 1px; background: #484848; border-radius: 3px; }
.vgroup { flex-direction: column; }
.apart { margin-top: 8px; }
.group.wide { margin-left: 8px; }
.group button, .vgroup button { position: relative; width: 35px; height: 34px; background: #595959; border-radius: 2px; display: grid; place-items: center; }
.vgroup button { width: 34px; height: 35px; }
.group svg, .vgroup svg { width: 34px; height: 34px; }
.group .on, .vgroup .on { background: #86a2d0; border-radius: 0; }
.group .lined { outline: 1px solid #d8da88; outline-offset: -1px; }
.group .gold { background: #d8da88; }
.more::after { content: ""; position: absolute; right: 1px; bottom: 1px; border: 3px solid transparent; border-right-color: #161616; border-bottom-color: #161616; }
.psr { fill: #ee6238; font: 800 11px "Open Sans", sans-serif; text-anchor: middle; }
.solo { fill: #1a1a1a; font: 900 19px "Inter", sans-serif; text-anchor: middle; }
.sky { --top: #9fd3ff; --left: #7fc0fb; --right: #5e9fdb; }
.mint { --top: #62f0a2; --left: #43e08a; --right: #37c477; }
.amber { --top: #ffab4f; --left: #f08a2c; --right: #d97a22; }
.white { --top: #f0f0f0; --left: #dedede; --right: #a8a8a8; }
.steel { --top: #6c6c6c; --left: #7d7d7d; --right: #474747; }
.orangetop { --top: #f08a2c; }
.ash { --top: #8a8a8a; --left: #777; --right: #666; opacity: .7; }
.rust { --top: #99614f; --left: #666; --right: #5c5c5c; opacity: .8; }
.discgrey { --disc: #7c7c7c; }
.discorange { --disc: #f08a2c; }
.discwhite { --disc: #eee; }
.orangeink { color: #d07c20; }
.ink { color: #1d1d1d; }

/* viewport */
.panelmenu { height: 23px; display: flex; align-items: center; gap: 10px; padding-left: 6px; border: 1px solid #4f4f4f; border-width: 1px 0; }
.panelicons { margin-left: auto; display: flex; gap: 4px; padding-right: 2px; color: #8a8a8a; }
.viewpanel { flex: 1; display: flex; flex-direction: column; border-left: 1px solid #4f4f4f; }
.viewpanel .panelmenu { border-bottom: 0; padding-left: 5px; }
.viewpanel .panelicons { color: #747474; padding-right: 1px; }
.viewport { flex: 1; position: relative; border: 1px solid #858585; background: linear-gradient(#4e4e4e, #393939); margin-left: -1px; }
.scene { position: absolute; inset: 0; width: 100%; height: 100%; }
.axes { font-size: 11px; text-anchor: middle; }
.tag { position: absolute; padding: 0 2px; border-radius: 2px; background: rgba(48, 48, 48, .65); color: #e2e2e2; line-height: 15px; }
.persp { left: 2px; top: 1px; }
.cam { left: 50%; top: 1px; transform: translateX(-50%); display: flex; align-items: center; gap: 2px; }
.spacing { right: 8px; bottom: 4px; }

/* timeline */
.timeline { height: 31px; display: flex; align-items: flex-start; padding: 5px 0 0 1px; }
.timeline .spin { margin: 1px 0 0 7px; }
.ruler { flex: 1; min-width: 0; position: relative; overflow: hidden; margin-left: 4px; padding: 0 6px 0 5px; height: 25px; }
.playhead { position: absolute; left: 1px; top: 0; width: 9px; height: 16px; background: #86a2d0; }
.numbers { display: flex; justify-content: space-between; height: 16px; line-height: 14px; color: #b4b4b4; }
.numbers span { width: 0; display: flex; justify-content: center; }
.numbers .now { color: #7d9dd6; justify-content: flex-start; text-indent: 6px; }
.ticks { height: 8px; margin-right: -1px;
  background:
    linear-gradient(#8a8a8a, #8a8a8a) 0 0 / 100% 1px no-repeat,
    repeating-linear-gradient(to right, #b0b0b0 0 1px, transparent 1px 1%) 0 4px / 100% 2px no-repeat,
    repeating-linear-gradient(to right, #b0b0b0 0 1px, transparent 1px 5%) 0 3px / 100% 4px no-repeat; }
.ruler::before { content: ""; position: absolute; inset: 2px 5px 3px; background: repeating-linear-gradient(to right, #8a8a8a 0 1px, transparent 1px 30%); }
.spin { position: relative; display: flex; align-items: center; height: 19px; min-width: 0; background: #323232; border: 1px solid #4c4c4c; border-radius: 3px; }
.spin input { flex: 1; width: 0; min-width: 0; padding-left: 4px; height: 17px; line-height: 17px; }
.spin > svg { width: 8px; height: 14px; }
.frame { width: 75px; }

/* transport */
.transport { height: 31px; display: flex; align-items: center; padding: 0 0 3px 1px; }
.transport > .frame { margin-left: 3px; }
.range { flex: 1; height: 18px; margin: 0 4px 0 7px; padding: 0 5px; display: flex; align-items: center; gap: 6px; background: #595959; border-radius: 2px; color: #ddd; line-height: 16px; }
.range .end { margin-left: auto; }
.handle { width: 4px; height: 10px; border: 1px solid #8a8a8a; border-width: 0 1px; }
.keys { display: flex; gap: 11px; margin-left: 10px; }
.small button { width: 27px; height: 27px; }
.small svg { width: 26px; height: 26px; }
.small.joined { margin-left: -7px; }

/* bottom managers */
.managers { display: flex; gap: 4px; height: 138px; margin-bottom: 3px; }
.materials { flex: 1; border: 1px solid #4f4f4f; }
.coords { width: 327px; border: 1px solid #4f4f4f; }
.managers .panelmenu { border-top: 0; padding-left: 5px; }
.coords .heads { gap: 0; padding-left: 4px; }
.heads span { width: 101px; }
.heads svg + span { margin-left: 8px; }
.heads span:last-child { width: auto; }
.fields { display: grid; grid-template-columns: 9px 1fr 9px 1fr 9px 1fr; gap: 3px; padding: 7px 3px 0 2px; align-items: center; }
.fields select, .apply { height: 18px; margin-top: 3px; }
.col2 { grid-column: 2; }
.col4 { grid-column: 4; }
.apply { grid-column: 6; background: #595959; border-radius: 2px; line-height: 16px; }
.status { height: 24px; border-top: 1px solid #4f4f4f; margin-right: 3px; padding: 6px 5px; }

/* right side */
.objects, .attributes { display: flex; min-height: 0; }
.objects { flex: 468 1 0; }
.attributes { flex: 558 1 0; }
.pane { flex: 1; background: #3d3d3d; }
.objects .pane { display: flex; flex-direction: column; }
.right .menu { gap: 14px; }
.sidetabs { width: 23px; display: flex; flex-direction: column; align-items: flex-start; }
.sidetabs button { writing-mode: vertical-rl; width: 20px; padding: 5px 0; color: #7e7e7e; line-height: 18px; }
.sidetabs .active { background: #3d3d3d; color: #dcdcdc; border: 1px solid #4f4f4f; border-left: 0; border-radius: 0 3px 3px 0; }

.tree { flex: 1; margin: 2px 2px 0 1px; border: 1px solid #4a4a4a; border-left: 0; background: linear-gradient(#4a4a4a, #4a4a4a) 109px 0 / 1px 100% no-repeat, linear-gradient(#4a4a4a, #4a4a4a) 148px 0 / 2px 100% no-repeat; }
.tree li { height: 20px; display: flex; align-items: center; }
.tree li:nth-child(odd) { background: linear-gradient(#515151, #515151) 148px 0 / 2px 100% no-repeat #474747; }
.name { width: 111px; display: flex; align-items: center; line-height: 20px; white-space: nowrap; }
.name svg + svg { margin: 0 3px 0 1px; }
.name svg:first-child { align-self: flex-start; }
.flags { width: 38px; height: 20px; margin-right: -13px; }
.tick { width: 12px; height: 12px; }
.phong { width: 15px; height: 16px; margin-left: 4px; }
.picked .name { color: #ffc440; }
.hidden-object { --dot: #ea5555; }

.off { color: #5c5c5c; }
.subject { display: flex; align-items: center; gap: 5px; height: 29px; padding-left: 3px; color: #b5b5b5; }
.tabs { display: flex; gap: 1px; margin-left: 3px; }
.tabs button { width: 58px; height: 18px; background: #595959; line-height: 17px; }
.tabs .active { background: #86a2d0; color: #000; }
.attributes h2 { font-size: 11px; font-weight: bold; color: #e6e6e6; margin: 8px 0 5px 4px; }
.prop { display: flex; align-items: center; height: 18px; margin: 0 4px 4px 3px; }
.prop label { width: 51px; white-space: nowrap; }
.prop input[type="radio"] { appearance: none; width: 15px; height: 15px; margin: 0 7px 0 0; border-radius: 50%; border: 2px solid #6a6a6a; background: radial-gradient(circle, #a0a0a0 0 4px, #2c2c2c 4px); }
.strength { width: 75px; height: 18px; border-radius: 3px 0 0 3px; }
.spin > .mark { position: absolute; left: -5px; top: -6px; width: 46px; height: 32px; }
.mark rect { fill: none; stroke: #f00; stroke-width: 3; stroke-dasharray: 11 6; }
input[type="range"] { appearance: none; flex: 1; min-width: 0; height: 18px; border: 1px solid #4c4c4c; border-radius: 0 3px 3px 0; background: linear-gradient(to right, #666 70%, #323232 70%); }
input[type="range"]::-webkit-slider-thumb { appearance: none; width: 3px; height: 16px; background: #86a2d0; }
.line { flex: 1; min-width: 0; height: 18px; background: #323232; border: 1px solid #4a4a4a; border-radius: 3px; }
hr { border: 0; border-top: 1px solid #4f4f4f; margin: 4px 4px 5px 3px; }
.prop.last { height: 17px; margin-bottom: 0; }
.prop select { flex: 1; height: 17px; background-color: #666; }
.options { margin: 0 3px 0 76px; height: 71px; border: 1px solid #565656; border-radius: 2px; padding: 1px 8px; }
.options li { position: relative; line-height: 22px; }
.options .mark { position: absolute; left: -11px; top: -2px; }
```
